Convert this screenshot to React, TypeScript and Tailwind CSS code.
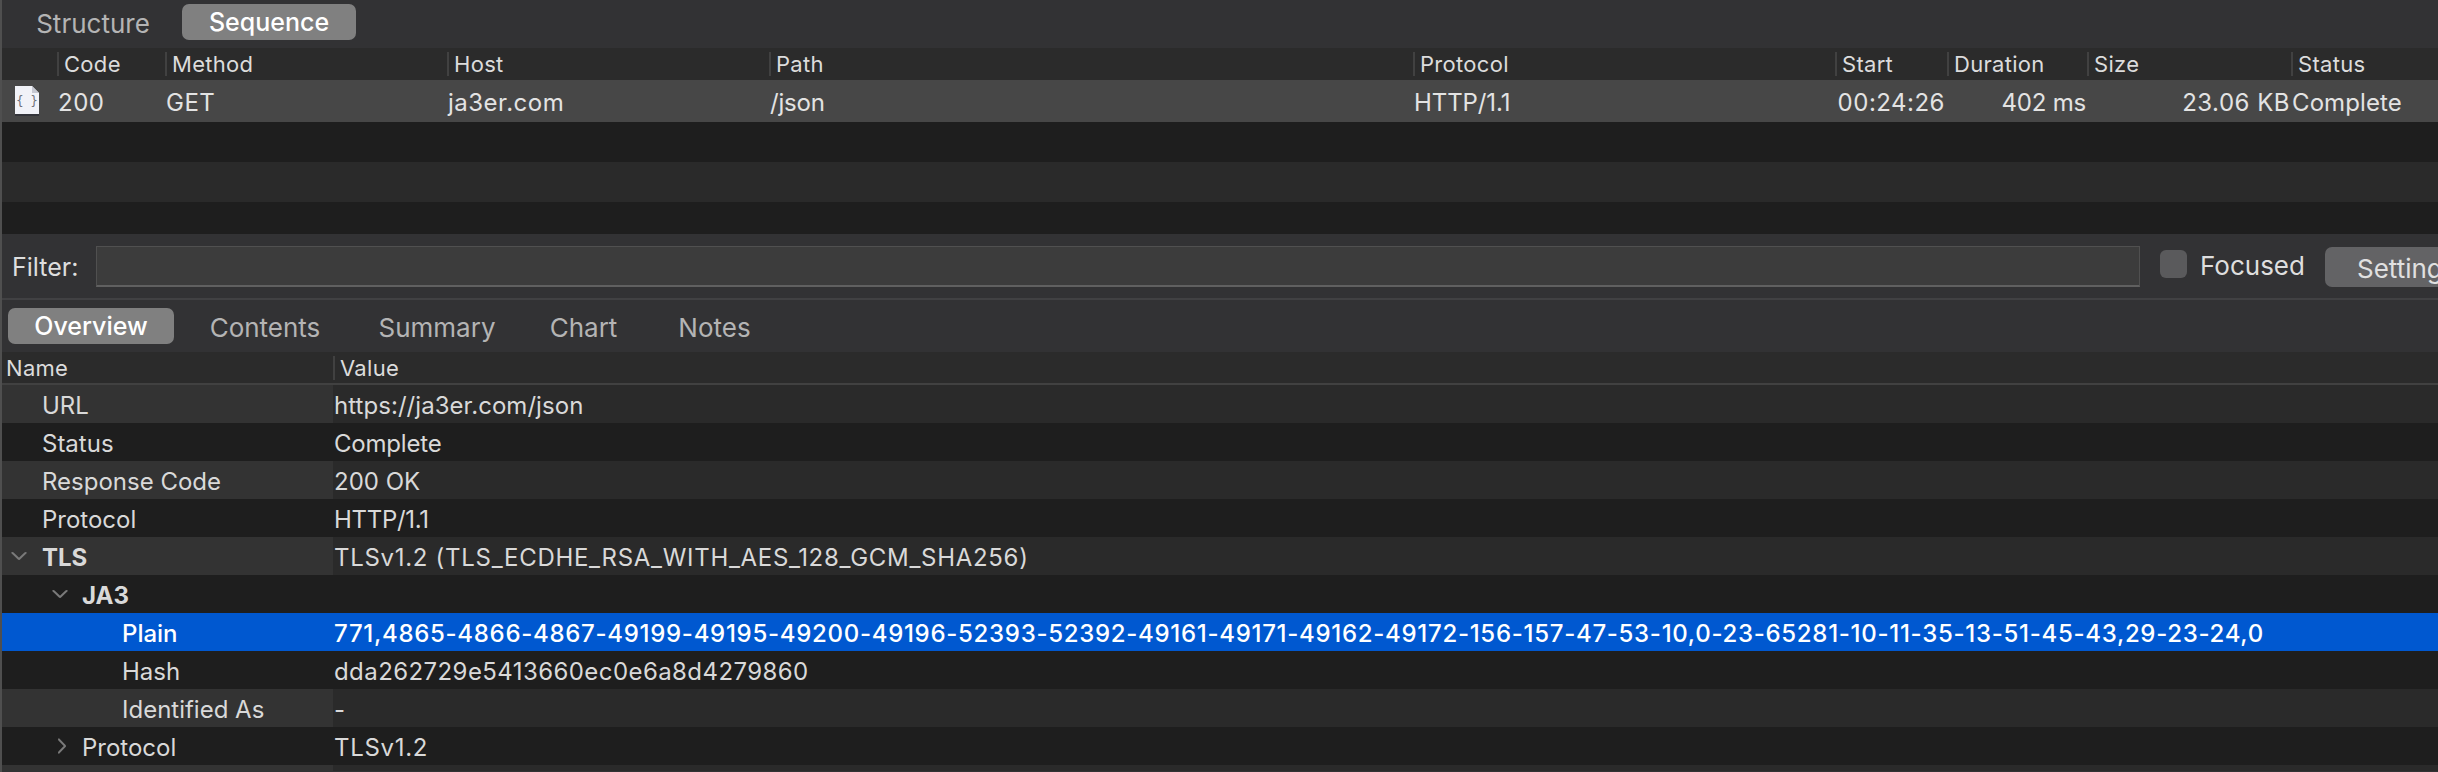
import React from "react";

const FONT = "font-['Inter','Liberation_Sans',sans-serif]";

function Chevron({ dir, className }: { dir: "down" | "right"; className: string }) {
  return (
    <svg viewBox="0 0 16 16" className={className} fill="none" stroke="#7a7a7a" strokeWidth="2.6" strokeLinecap="round" strokeLinejoin="round" preserveAspectRatio="none">
      {dir === "down" ? <polyline points="1.5,3 8,13 14.5,3" /> : <polyline points="3,1.5 13,8 3,14.5" />}
    </svg>
  );
}

function DocIcon() {
  return (
    <svg viewBox="0 0 24 30" className="w-[24px] h-[30px]">
      <rect x="0" y="28" width="24" height="2" fill="#33343a" />
      <path d="M0 0H17L24 7V28H0Z" fill="#f1f2f8" />
      <path d="M17 0L24 7H17Z" fill="#c6c8d2" />
      <text x="12" y="19" textAnchor="middle" fontSize="12" fontFamily="DejaVu Sans Mono, monospace" fill="#6d7078">{"{ }"}</text>
    </svg>
  );
}

const headerCols: [string, string][] = [
  ["Code", "w-[108px]"],
  ["Method", "w-[282px]"],
  ["Host", "w-[322px]"],
  ["Path", "w-[644px]"],
  ["Protocol", "w-[422px]"],
  ["Start", "w-[112px]"],
  ["Duration", "w-[140px]"],
  ["Size", "w-[204px]"],
  ["Status", "flex-1"],
];

function SeqTab({ label, active, className }: { label: string; active?: boolean; className: string }) {
  return (
    <div className={`h-[36px] pt-[2px] flex items-center justify-center rounded-[7px] ${active ? "bg-[#808080] text-white font-medium text-[25px]" : "text-[#b4b4b4] text-[26px]"} ${className}`}>
      {label}
    </div>
  );
}

type Row = {
  name: string;
  value: string;
  indent: string;
  track: string;
  bold?: boolean;
  chevron?: "down" | "right";
  chevronClass?: string;
  selected?: boolean;
};

const rows: Row[] = [
  { name: "URL", value: "https://ja3er.com/json", indent: "pl-[40px]", track: "tracking-[0.05px]" },
  { name: "Status", value: "Complete", indent: "pl-[40px]", track: "tracking-[-0.2px]" },
  { name: "Response Code", value: "200 OK", indent: "pl-[40px]", track: "tracking-[0px]" },
  { name: "Protocol", value: "HTTP/1.1", indent: "pl-[40px]", track: "tracking-[-0.3px]" },
  { name: "TLS", value: "TLSv1.2 (TLS_ECDHE_RSA_WITH_AES_128_GCM_SHA256)", indent: "pl-[40px]", track: "tracking-[0.7px]", bold: true, chevron: "down", chevronClass: "left-[9px] top-[14px] w-[16px] h-[10px]" },
  { name: "JA3", value: "", indent: "pl-[80px]", track: "tracking-[0px]", bold: true, chevron: "down", chevronClass: "left-[50px] top-[14px] w-[16px] h-[10px]" },
  { name: "Plain", value: "771,4865-4866-4867-49199-49195-49200-49196-52393-52392-49161-49171-49162-49172-156-157-47-53-10,0-23-65281-10-11-35-13-51-45-43,29-23-24,0", indent: "pl-[120px]", track: "tracking-[0.7px]", selected: true },
  { name: "Hash", value: "dda262729e5413660ec0e6a8d4279860", indent: "pl-[120px]", track: "tracking-[0.42px]" },
  { name: "Identified As", value: "-", indent: "pl-[120px]", track: "tracking-[0px]" },
  { name: "Protocol", value: "TLSv1.2", indent: "pl-[80px]", track: "tracking-[0.7px]", chevron: "right", chevronClass: "left-[55px] top-[11px] w-[10px] h-[16px]" },
];

function DetailRow({ row, odd }: { row: Row; odd: boolean }) {
  const nameBg = row.selected ? "bg-[#0058d0]" : odd ? "bg-[#1e1e1e]" : "bg-[#333333]";
  const valueBg = row.selected ? "bg-[#0058d0]" : odd ? "bg-[#1e1e1e]" : "bg-[#2a2a2a]";
  const color = row.selected ? "text-white font-medium" : "text-[#d9d9d9]";
  return (
    <div className={`flex h-[38px] shrink-0 items-stretch text-[24px] ${color}`}>
      <div className={`relative w-[331px] shrink-0 flex items-center pt-[3px] ${row.indent} ${nameBg} ${row.bold ? "font-bold" : ""}`}>
        {row.chevron && <Chevron dir={row.chevron} className={`absolute ${row.chevronClass}`} />}
        {row.name}
      </div>
      <div className={`flex-1 flex items-center pt-[3px] pl-[1px] whitespace-nowrap ${row.track} ${valueBg}`}>{row.value}</div>
    </div>
  );
}

export default function App() {
  return (
    <div className={`w-[2438px] h-[772px] overflow-hidden bg-[#323234] border-l-2 border-[#4f4f4f] flex flex-col ${FONT}`}>
      {/* Top tabs */}
      <div className="h-[48px] shrink-0 flex items-start pt-[4px] pl-[10px] gap-[8px]">
        <SeqTab label="Structure" className="w-[162px]" />
        <SeqTab label="Sequence" active className="w-[174px]" />
      </div>

      {/* Table header */}
      <div className="h-[32px] shrink-0 bg-[#2b2b2b] flex items-center pl-[55px] text-[22px] tracking-[0.3px] text-[#dcdcdc] overflow-hidden">
        {headerCols.map(([label, w]) => (
          <div key={label} className={`${w} shrink-0 h-[24px] border-l-2 border-[#414141] pl-[5px] flex items-center`}>
            {label}
          </div>
        ))}
      </div>

      {/* Selected table row */}
      <div className="h-[42px] shrink-0 bg-[#474747] flex items-center pt-[3px] text-[24px] text-[#e3e3e3] whitespace-nowrap">
        <div className="w-[56px] pl-[13px] -mt-[3px] shrink-0 flex items-center"><DocIcon /></div>
        <div className="w-[108px] shrink-0 tracking-[0.5px]">200</div>
        <div className="w-[282px] shrink-0 tracking-[0.5px]">GET</div>
        <div className="w-[322px] shrink-0 tracking-[0.5px]">ja3er.com</div>
        <div className="w-[644px] shrink-0 tracking-[-0.2px]">/json</div>
        <div className="w-[423px] shrink-0 tracking-[-0.1px]">HTTP/1.1</div>
        <div className="w-[108px] shrink-0 text-right tracking-[0.5px]">00:24:26</div>
        <div className="w-[141px] shrink-0 text-right tracking-[-0.2px]">402 ms</div>
        <div className="w-[204px] shrink-0 text-right tracking-[0.5px]">23.06 KB</div>
        <div className="flex-1 pl-[2px] tracking-[0.1px]">Complete</div>
      </div>

      {/* Empty rows */}
      <div className="h-[40px] shrink-0 bg-[#1e1e1e]" />
      <div className="h-[40px] shrink-0 bg-[#2a2a2a]" />
      <div className="h-[32px] shrink-0 bg-[#1e1e1e]" />

      {/* Filter bar */}
      <div className="h-[66px] shrink-0 flex items-start pt-[12px] border-b-2 border-[#414143]">
        <div className="w-[94px] pl-[10px] pt-[3px] shrink-0 h-[41px] flex items-center text-[25px] text-[#dedede]">Filter:</div>
        <div className="w-[2044px] shrink-0 h-[41px] bg-[#3c3c3c] border border-[#505050] border-b-2 border-b-[#606060]" />
        <div className="ml-[20px] mt-[4px] w-[27px] h-[28px] shrink-0 rounded-[6px] bg-[#5a5a5c]" />
        <div className="ml-[13px] pt-[3px] h-[36px] shrink-0 flex items-center text-[26px] text-[#dedede]">Focused</div>
        <div className="ml-[20px] mt-[1px] w-[200px] h-[40px] pt-[2px] shrink-0 rounded-[7px] bg-[#636365] flex items-center pl-[32px] text-[26px] text-[#e0e0e0]">
          Settings
        </div>
      </div>

      {/* Lower tabs */}
      <div className="h-[52px] shrink-0 flex items-start pt-[8px] pl-[6px]">
        <SeqTab label="Overview" active className="w-[166px]" />
        <SeqTab label="Contents" className="ml-[35px] w-[112px]" />
        <SeqTab label="Summary" className="ml-[57px] w-[118px]" />
        <SeqTab label="Chart" className="ml-[54px] w-[67px]" />
        <SeqTab label="Notes" className="ml-[61px] w-[73px]" />
      </div>

      {/* Detail header */}
      <div className="h-[33px] shrink-0 bg-[#2b2b2b] border-b-2 border-[#414141] flex items-center text-[22px] tracking-[0.3px] text-[#dcdcdc]">
        <div className="w-[331px] shrink-0 pl-[4px] pt-[2px]">Name</div>
        <div className="h-[24px] border-l-2 border-[#414141] pl-[5px] pt-[2px] flex items-center">Value</div>
      </div>

      {/* Detail rows */}
      {rows.map((row, i) => (
        <DetailRow key={row.name + i} row={row} odd={i % 2 === 1} />
      ))}
      <div className="flex h-[6px] shrink-0">
        <div className="w-[331px] bg-[#333333]" />
        <div className="flex-1 bg-[#2a2a2a]" />
      </div>
    </div>
  );
}
